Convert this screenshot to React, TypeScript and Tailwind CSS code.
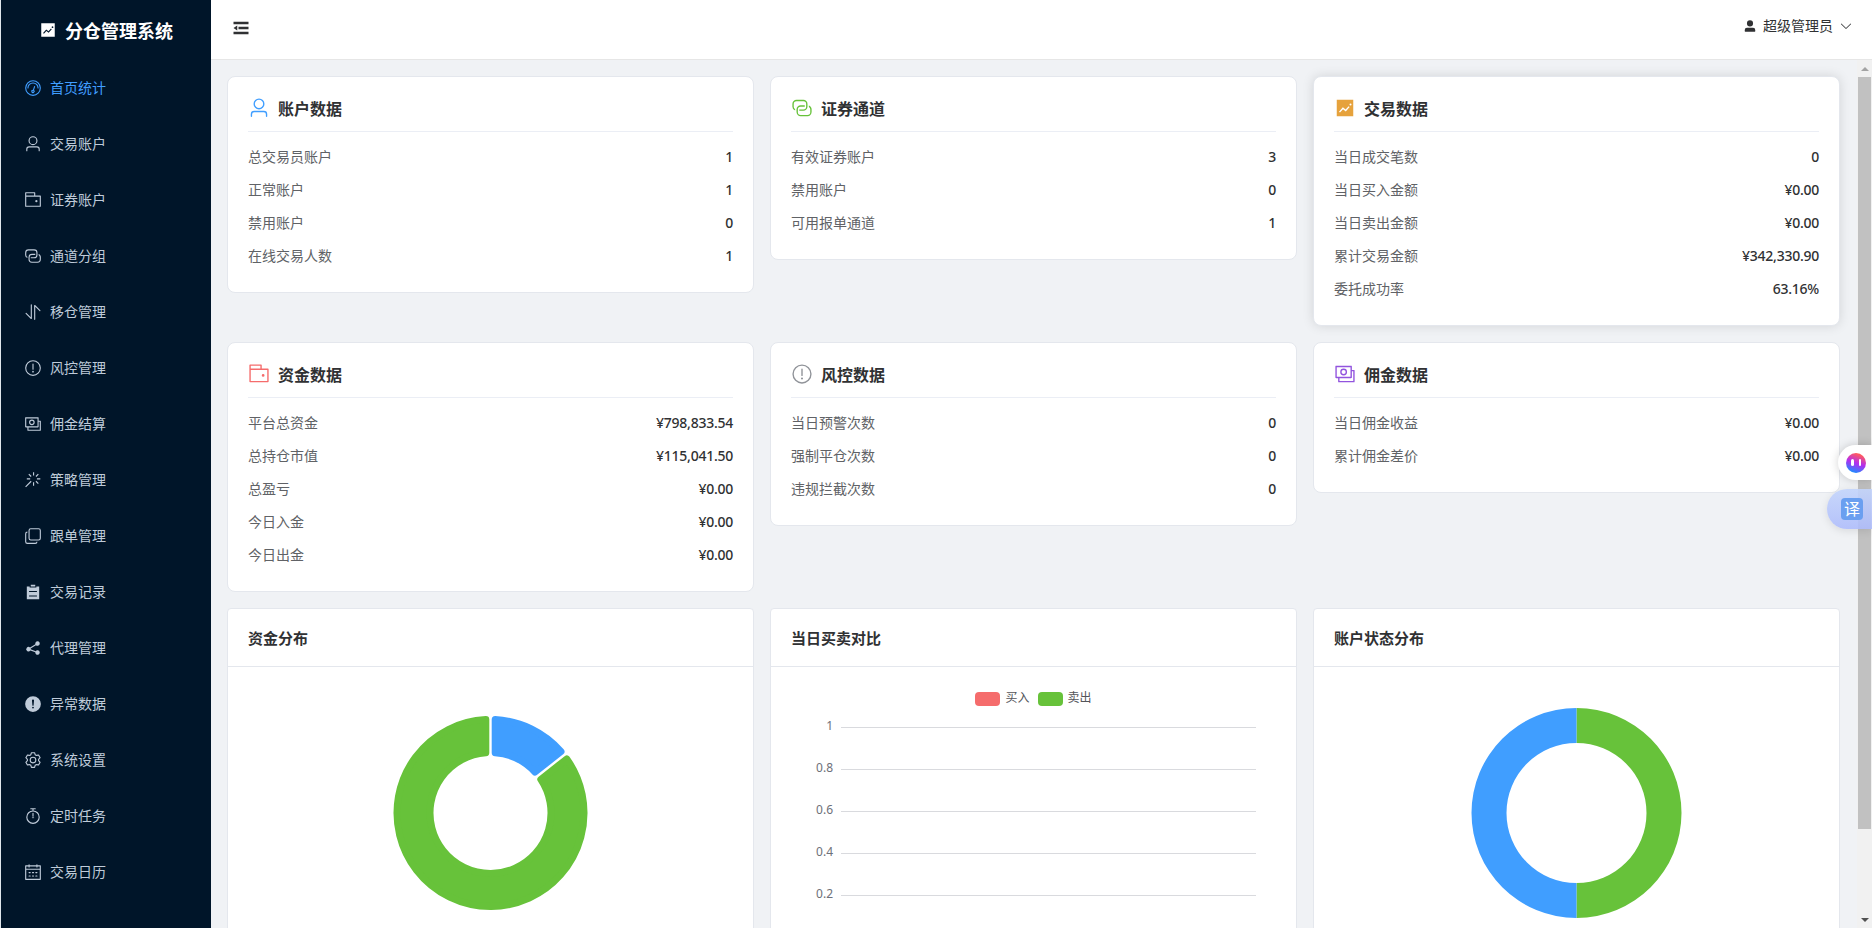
import type { ReactNode } from "react";

type IconProps = { d: string; className?: string };

function Icon({ d, className }: IconProps) {
  return (
    <svg viewBox="0 0 1024 1024" fill="currentColor" className={className}>
      <path d={d} />
    </svg>
  );
}

const ICONS = {
  odometer:
    "M512 896a384 384 0 1 0 0-768 384 384 0 0 0 0 768zm0 64a448 448 0 1 1 0-896 448 448 0 0 1 0 896zM192 512a320 320 0 1 1 640 0 32 32 0 1 1-64 0 256 256 0 1 0-512 0 32 32 0 0 1-64 0zM570.432 627.84A96 96 0 1 1 509.568 608l60.992-187.776A32 32 0 1 1 631.424 440l-60.992 187.776zM502.08 734.464a32 32 0 1 0 19.84-60.928 32 32 0 0 0-19.84 60.928z",
  user: "M512 512a192 192 0 1 0 0-384 192 192 0 0 0 0 384zm0 64a256 256 0 1 1 0-512 256 256 0 0 1 0 512zm320 320v-96a96 96 0 0 0-96-96H288a96 96 0 0 0-96 96v96a32 32 0 1 1-64 0v-96a160 160 0 0 1 160-160h448a160 160 0 0 1 160 160v96a32 32 0 1 1-64 0z",
  wallet:
    "M640 288h-64V128H128v704h384v32a32 32 0 0 0 32 32H96a32 32 0 0 1-32-32V96a32 32 0 0 1 32-32h512a32 32 0 0 1 32 32v192zM128 320v512h768V320H128zm-32-64h832a32 32 0 0 1 32 32v576a32 32 0 0 1-32 32H96a32 32 0 0 1-32-32V288a32 32 0 0 1 32-32zM704 640a64 64 0 1 1 0-128 64 64 0 0 1 0 128z",
  connection:
    "M640 384v64H448a128 128 0 0 0-128 128v128a128 128 0 0 0 128 128h320a128 128 0 0 0 128-128V576a128 128 0 0 0-64-110.848V394.88c74.56 26.368 128 97.472 128 181.056v128a192 192 0 0 1-192 192H448a192 192 0 0 1-192-192V576a192 192 0 0 1 192-192h192zM384 640v-64h192a128 128 0 0 0 128-128V320a128 128 0 0 0-128-128H256a128 128 0 0 0-128 128v128a128 128 0 0 0 64 110.848v70.272A192.064 192.064 0 0 1 64 448V320a192 192 0 0 1 192-192h320a192 192 0 0 1 192 192v128a192 192 0 0 1-192 192H384z",
  sort: "M384 96a32 32 0 0 1 64 0v786.752a32 32 0 0 1-54.592 22.656L95.936 608a32 32 0 0 1 0-45.312h.128a32 32 0 0 1 45.184 0L384 805.632V96zm192 45.248a32 32 0 0 1 54.592-22.592L928.064 416a32 32 0 0 1 0 45.312h-.128a32 32 0 0 1-45.184 0L640 218.496V928a32 32 0 1 1-64 0V141.248z",
  warning:
    "M512 64a448 448 0 1 1 0 896 448 448 0 0 1 0-896zm0 832a384 384 0 0 0 0-768 384 384 0 0 0 0 768zm48-176a48 48 0 1 1-96 0 48 48 0 0 1 96 0zm-48-464a32 32 0 0 1 32 32v288a32 32 0 0 1-64 0V288a32 32 0 0 1 32-32z",
  warningFilled:
    "M512 64a448 448 0 1 1 0 896 448 448 0 0 1 0-896zm0 192a58.432 58.432 0 0 0-58.24 63.744l23.36 256.384a35.072 35.072 0 0 0 69.76 0l23.296-256.384A58.432 58.432 0 0 0 512 256zm0 512a51.2 51.2 0 1 0 0-102.4 51.2 51.2 0 0 0 0 102.4z",
  money:
    "M256 640v192h640V384H768v-64h150.976c14.272 0 19.456 1.472 24.64 4.288a29.056 29.056 0 0 1 12.16 12.096c2.752 5.184 4.224 10.368 4.224 24.64v493.952c0 14.272-1.472 19.456-4.288 24.64a29.056 29.056 0 0 1-12.096 12.16c-5.184 2.752-10.368 4.224-24.64 4.224H233.024c-14.272 0-19.456-1.472-24.64-4.288a29.056 29.056 0 0 1-12.16-12.096c-2.688-5.184-4.224-10.368-4.224-24.576V640h64zM768 192H128v448h640V192zm64-22.976v493.952c0 14.272-1.472 19.456-4.288 24.64a29.056 29.056 0 0 1-12.096 12.16c-5.184 2.752-10.368 4.224-24.64 4.224H105.024c-14.272 0-19.456-1.472-24.64-4.288a29.056 29.056 0 0 1-12.16-12.096C65.536 682.432 64 677.248 64 663.04V169.024c0-14.272 1.472-19.456 4.288-24.64a29.056 29.056 0 0 1 12.096-12.16C85.568 129.536 90.752 128 104.96 128h685.952c14.272 0 19.456 1.472 24.64 4.288a29.056 29.056 0 0 1 12.16 12.096c2.752 5.184 4.224 10.368 4.224 24.64zM448 576a160 160 0 1 1 0-320 160 160 0 0 1 0 320zm0-64a96 96 0 1 0 0-192 96 96 0 0 0 0 192z",
  magicStick:
    "M512 64h64v192h-64V64zm0 576h64v192h-64V640zM160 480v-64h192v64H160zm576 0v-64h192v64H736zM249.856 199.04l45.248-45.184L430.848 289.6 385.6 334.848 249.856 199.104zM657.152 606.4l45.248-45.248 135.744 135.744-45.248 45.248L657.152 606.4zM114.048 923.2 68.8 877.952l316.8-316.8 45.248 45.248-316.8 316.8zM702.4 334.848 657.152 289.6l135.744-135.744 45.248 45.248L702.4 334.848z",
  copyDocument:
    "M768 832a128 128 0 0 1-128 128H192A128 128 0 0 1 64 832V384a128 128 0 0 1 128-128v64a64 64 0 0 0-64 64v448a64 64 0 0 0 64 64h448a64 64 0 0 0 64-64h64zM384 128a64 64 0 0 0-64 64v448a64 64 0 0 0 64 64h448a64 64 0 0 0 64-64V192a64 64 0 0 0-64-64H384zm0-64h448a128 128 0 0 1 128 128v448a128 128 0 0 1-128 128H384a128 128 0 0 1-128-128V192A128 128 0 0 1 384 64z",
  list: "M704 192h160v736H160V192h160v64h384v-64zM288 512h448v-64H288v64zm0 256h448v-64H288v64zm96-576V96h256v96H384z",
  share:
    "m679.872 348.8-301.76 188.608a127.808 127.808 0 0 1 5.12 52.16l279.936 104.96a128 128 0 1 1-22.464 59.904l-279.872-104.96a128 128 0 1 1-16.64-166.272l301.696-188.608a128 128 0 1 1 33.92 54.272z",
  setting:
    "M600.704 64a32 32 0 0 1 30.464 22.208l35.2 109.376c14.784 7.232 28.928 15.36 42.432 24.512l112.384-24.192a32 32 0 0 1 34.432 15.36L944.32 364.8a32 32 0 0 1-4.032 37.504l-77.12 85.12a357.12 357.12 0 0 1 0 49.024l77.12 85.248a32 32 0 0 1 4.032 37.504l-88.704 153.6a32 32 0 0 1-34.432 15.296L708.8 803.904c-13.44 9.088-27.648 17.28-42.368 24.512l-35.264 109.376A32 32 0 0 1 600.704 960H423.296a32 32 0 0 1-30.464-22.208L357.696 828.48a351.616 351.616 0 0 1-42.56-24.64l-112.32 24.256a32 32 0 0 1-34.432-15.36L79.68 659.2a32 32 0 0 1 4.032-37.504l77.12-85.248a357.12 357.12 0 0 1 0-48.896l-77.12-85.248A32 32 0 0 1 79.68 364.8l88.704-153.6a32 32 0 0 1 34.432-15.296l112.32 24.256c13.568-9.152 27.776-17.408 42.56-24.64l35.2-109.312A32 32 0 0 1 423.232 64H600.64zm-23.424 64H446.72l-36.352 113.088-24.512 11.968a294.113 294.113 0 0 0-34.816 20.096l-22.656 15.36-116.224-25.088-65.28 113.152 79.68 88.192-1.92 27.136a293.12 293.12 0 0 0 0 40.192l1.92 27.136-79.808 88.192 65.344 113.152 116.224-25.024 22.656 15.296a294.113 294.113 0 0 0 34.816 20.096l24.512 11.968L446.72 896h130.688l36.48-113.152 24.448-11.904a288.282 288.282 0 0 0 34.752-20.096l22.592-15.296 116.288 25.024 65.28-113.152-79.744-88.192 1.92-27.136a293.12 293.12 0 0 0 0-40.256l-1.92-27.136 79.808-88.128-65.344-113.152-116.288 24.96-22.592-15.232a287.616 287.616 0 0 0-34.752-20.096l-24.448-11.904L577.344 128zM512 320a192 192 0 1 1 0 384 192 192 0 0 1 0-384zm0 64a128 128 0 1 0 0 256 128 128 0 0 0 0-256z",
  timer:
    "M512 896a320 320 0 1 0 0-640 320 320 0 0 0 0 640zm0 64a384 384 0 1 1 0-768 384 384 0 0 1 0 768zM512 320a32 32 0 0 1 32 32l-.512 224a32 32 0 1 1-64 0L480 352a32 32 0 0 1 32-32zM448 576a64 64 0 1 0 128 0 64 64 0 1 0-128 0zm96-448v128h-64V128h-96a32 32 0 0 1 0-64h256a32 32 0 1 1 0 64h-96z",
  calendar:
    "M128 384v512h768V192H768v32a32 32 0 1 1-64 0v-32H320v32a32 32 0 0 1-64 0v-32H128v128h768v64H128zm192-256h384V96a32 32 0 1 1 64 0v32h160a32 32 0 0 1 32 32v768a32 32 0 0 1-32 32H96a32 32 0 0 1-32-32V160a32 32 0 0 1 32-32h160V96a32 32 0 0 1 64 0v32zm-32 384h64a32 32 0 0 1 0 64h-64a32 32 0 0 1 0-64zm0 192h64a32 32 0 1 1 0 64h-64a32 32 0 1 1 0-64zm192-192h64a32 32 0 0 1 0 64h-64a32 32 0 0 1 0-64zm0 192h64a32 32 0 1 1 0 64h-64a32 32 0 1 1 0-64zm192-192h64a32 32 0 1 1 0 64h-64a32 32 0 1 1 0-64zm0 192h64a32 32 0 1 1 0 64h-64a32 32 0 1 1 0-64z",
  trendCharts:
    "M128 896V128h768v768H128zm291.712-327.296 128 102.4 180.16-201.792-47.744-42.624-139.84 156.608-128-102.4-180.16 201.792 47.744 42.624 139.84-156.608zM816 352a48 48 0 1 0-96 0 48 48 0 0 0 96 0z",
  userFilled:
    "M288 320a224 224 0 1 0 448 0 224 224 0 1 0-448 0zm544 608H160a32 32 0 0 1-32-32v-96a160 160 0 0 1 160-160h448a160 160 0 0 1 160 160v96a32 32 0 0 1-32 32z",
  arrowDown:
    "M831.872 340.864 512 652.672 192.128 340.864a30.592 30.592 0 0 0-42.752 0 29.12 29.12 0 0 0 0 41.6L489.664 714.24a32 32 0 0 0 44.672 0l340.288-331.712a29.12 29.12 0 0 0 0-41.728 30.592 30.592 0 0 0-42.752 0z",
  fold: "M896 192H128v128h768V192zm0 256H384v128h512V448zm0 256H128v128h768V704zM320 384 128 512l192 128V384z",
};

const MENU = [
  { label: "首页统计", icon: ICONS.odometer, active: true },
  { label: "交易账户", icon: ICONS.user },
  { label: "证券账户", icon: ICONS.wallet },
  { label: "通道分组", icon: ICONS.connection },
  { label: "移仓管理", icon: ICONS.sort },
  { label: "风控管理", icon: ICONS.warning },
  { label: "佣金结算", icon: ICONS.money },
  { label: "策略管理", icon: ICONS.magicStick },
  { label: "跟单管理", icon: ICONS.copyDocument },
  { label: "交易记录", icon: ICONS.list },
  { label: "代理管理", icon: ICONS.share },
  { label: "异常数据", icon: ICONS.warningFilled },
  { label: "系统设置", icon: ICONS.setting },
  { label: "定时任务", icon: ICONS.timer },
  { label: "交易日历", icon: ICONS.calendar },
];

const STATS = [
  {
    title: "账户数据",
    icon: ICONS.user,
    color: "text-[#409eff]",
    rows: [
      ["总交易员账户", "1"],
      ["正常账户", "1"],
      ["禁用账户", "0"],
      ["在线交易人数", "1"],
    ],
  },
  {
    title: "证券通道",
    icon: ICONS.connection,
    color: "text-[#67c23a]",
    rows: [
      ["有效证券账户", "3"],
      ["禁用账户", "0"],
      ["可用报单通道", "1"],
    ],
  },
  {
    title: "交易数据",
    icon: ICONS.trendCharts,
    color: "text-[#e6a23c]",
    hover: true,
    rows: [
      ["当日成交笔数", "0"],
      ["当日买入金额", "¥0.00"],
      ["当日卖出金额", "¥0.00"],
      ["累计交易金额", "¥342,330.90"],
      ["委托成功率", "63.16%"],
    ],
  },
  {
    title: "资金数据",
    icon: ICONS.wallet,
    color: "text-[#f56c6c]",
    rows: [
      ["平台总资金", "¥798,833.54"],
      ["总持仓市值", "¥115,041.50"],
      ["总盈亏", "¥0.00"],
      ["今日入金", "¥0.00"],
      ["今日出金", "¥0.00"],
    ],
  },
  {
    title: "风控数据",
    icon: ICONS.warning,
    color: "text-[#909399]",
    rows: [
      ["当日预警次数", "0"],
      ["强制平仓次数", "0"],
      ["违规拦截次数", "0"],
    ],
  },
  {
    title: "佣金数据",
    icon: ICONS.money,
    color: "text-[#9254de]",
    rows: [
      ["当日佣金收益", "¥0.00"],
      ["累计佣金差价", "¥0.00"],
    ],
  },
];

function Sidebar() {
  return (
    <aside className="w-[211px] shrink-0 border-l border-[#dfe6ec] bg-[#001529]">
      <div className="flex h-[60px] items-center justify-center gap-2 text-white">
        <Icon d={ICONS.trendCharts} className="size-[18px]" />
        <span className="-mt-px text-lg font-bold">分仓管理系统</span>
      </div>
      <nav>
        {MENU.map((item) => (
          <a
            key={item.label}
            className={`flex h-14 items-center gap-2 pl-[23px] text-sm ${
              item.active ? "text-[#409eff]" : "text-[#bfcbd9]"
            }`}
          >
            <Icon d={item.icon} className="size-[18px]" />
            <span className="-mt-0.5">{item.label}</span>
          </a>
        ))}
      </nav>
    </aside>
  );
}

function Header() {
  return (
    <header className="flex h-[60px] shrink-0 justify-between border-b border-[#e6e6e6] bg-white pr-[19px] pl-5 text-[#303133]">
      <Icon d={ICONS.fold} className="mt-[18px] size-5" />
      <div className="mt-4 flex h-5 items-center gap-1.5 text-sm">
        <Icon d={ICONS.userFilled} className="size-3.5" />
        <span className="-mt-0.5">超级管理员</span>
        <Icon d={ICONS.arrowDown} className="size-3.5" />
      </div>
    </header>
  );
}

function StatCard({ title, icon, color, rows, hover }: (typeof STATS)[number]) {
  return (
    <section
      className={`rounded-lg border border-[#e4e7ed] bg-white p-5 ${
        hover ? "shadow-[0_0_12px_rgba(0,0,0,0.12)]" : ""
      }`}
    >
      <div className="mb-2 flex h-[35px] gap-2 border-b border-[#ebeef5]">
        <Icon d={icon} className={`size-[22px] ${color}`} />
        <h3 className="text-base leading-[22px] font-semibold text-[#303133]">{title}</h3>
      </div>
      {rows.map(([label, value]) => (
        <div key={label} className="flex h-[33px] items-center justify-between text-sm">
          <span className="-mt-0.5 text-[#606266]">{label}</span>
          <span className="font-['Noto_Sans'] font-medium tracking-[-0.25px] text-[#303133]">{value}</span>
        </div>
      ))}
    </section>
  );
}

function ChartCard({ title, children }: { title: string; children: ReactNode }) {
  return (
    <section className="h-[380px] rounded-t border border-[#e4e7ed] bg-white">
      <h3 className="flex h-[58px] items-center border-b border-[#e4e7ed] px-5 pt-0.5 text-[15px] font-semibold text-[#303133]">
        {title}
      </h3>
      <div className="px-5 pt-5">{children}</div>
    </section>
  );
}

// ring sector path, angles in degrees clockwise from 12 o'clock;
// both straight edges are moved inwards by `inset` px, so the gap between sectors keeps one width
function sector(r0: number, r1: number, from: number, to: number, inset = 0) {
  const pt = (r: number, angle: number, side: number) => {
    const rad = ((angle - 90) * Math.PI) / 180 + side * Math.asin(inset / r);
    return `${242.5 + r * Math.cos(rad)} ${126 + r * Math.sin(rad)}`;
  };
  const large = to - from > 180 ? 1 : 0;
  return `M${pt(r1, from, 1)}A${r1} ${r1} 0 ${large} 1 ${pt(r1, to, -1)}L${pt(r0, to, -1)}A${r0} ${r0} 0 ${large} 0 ${pt(r0, from, 1)}Z`;
}

function FundChart() {
  // the round-joined stroke gives the sectors their soft corners
  return (
    <svg viewBox="0 0 485 280" className="h-[280px] w-full" strokeWidth="7" strokeLinejoin="round">
      <path d={sector(60.5, 93.5, 0, 51.8, 4.7)} fill="#409eff" stroke="#409eff" />
      <path d={sector(60.5, 93.5, 51.8, 360, 4.7)} fill="#67c23a" stroke="#67c23a" />
    </svg>
  );
}

function StatusChart() {
  return (
    <svg viewBox="0 0 485 280" className="h-[280px] w-full">
      <path d={sector(70, 105, 0, 180)} fill="#67c23a" />
      <path d={sector(70, 105, 180, 360)} fill="#409eff" />
    </svg>
  );
}

function TradeChart() {
  return (
    <div className="h-[280px] overflow-hidden pt-[5px] font-['Noto_Sans','Noto_Sans_CJK_SC',sans-serif] text-xs text-[#54555a]">
      <div className="flex h-3.5 items-center justify-center gap-2">
        <span className="flex items-center gap-[5px]">
          <i className="h-3.5 w-[25px] rounded bg-[#f56c6c]" />
          <span className="-mt-0.5">买入</span>
        </span>
        <span className="flex items-center gap-[5px]">
          <i className="h-3.5 w-[25px] rounded bg-[#67c23a]" />
          <span className="-mt-0.5">卖出</span>
        </span>
      </div>
      <div className="pr-5 pl-[10px]">
        {["1", "0.8", "0.6", "0.4", "0.2"].map((tick) => (
          <div key={tick} className="flex h-[42px] items-center">
            <span className="mr-2 -mt-[3px] w-8 text-right text-[#6e7079]">{tick}</span>
            <span className="h-px flex-1 bg-[#d9dade]" />
          </div>
        ))}
      </div>
    </div>
  );
}

function Scrollbar() {
  return (
    <div className="flex w-[15px] shrink-0 flex-col items-center bg-[#f1f1f1]">
      <div className="flex h-[17px] items-center">
        <i className="border-x-4 border-b-4 border-x-transparent border-b-[#a3a3a3]" />
      </div>
      <div className="h-[752px] w-[13px] bg-[#c1c1c1]" />
      <div className="mt-auto flex h-[17px] items-center">
        <i className="border-x-4 border-t-4 border-x-transparent border-t-[#505050]" />
      </div>
    </div>
  );
}

function FloatingTools() {
  return (
    <>
      <div className="absolute top-[445px] right-0 flex h-[35px] w-[34px] items-center rounded-l-full bg-white pl-2 shadow-[0_0_10px_rgba(0,0,0,0.18)]">
        <div className="flex size-5 items-center justify-center gap-[5px] rounded-full bg-[linear-gradient(200deg,#ff5a5f_15%,#b32cf0_50%,#1f8bff_88%)]">
          <i className="h-[7px] w-[2.5px] rounded-full bg-white" />
          <i className="h-[7px] w-[2.5px] rounded-full bg-white" />
        </div>
      </div>
      <div className="absolute top-[489px] right-0 flex h-10 w-[45px] items-center rounded-l-full bg-linear-to-b from-[#c3d4fb]/90 to-[#aebcfb]/90 pl-3.5 shadow-[0_2px_8px_rgba(0,0,0,0.1)]">
        <span className="flex size-[22px] items-center justify-center rounded bg-[#6a9ff0] pb-0.5 text-base leading-none text-white">
          译
        </span>
      </div>
    </>
  );
}

export default function App() {
  return (
    <div className="relative flex h-[928px] w-[1872px] overflow-hidden bg-[#f0f2f5] font-['Noto_Sans_CJK_SC',sans-serif]">
      <Sidebar />
      <div className="flex min-w-0 flex-1 flex-col">
        <Header />
        <div className="flex min-h-0 flex-1">
          <main className="grid min-w-0 flex-1 grid-cols-3 content-start items-start gap-4 overflow-hidden pt-4 pr-[17px] pl-4">
            {STATS.map((card) => (
              <StatCard key={card.title} {...card} />
            ))}
            <ChartCard title="资金分布">
              <FundChart />
            </ChartCard>
            <ChartCard title="当日买卖对比">
              <TradeChart />
            </ChartCard>
            <ChartCard title="账户状态分布">
              <StatusChart />
            </ChartCard>
          </main>
          <Scrollbar />
        </div>
      </div>
      <FloatingTools />
    </div>
  );
}
